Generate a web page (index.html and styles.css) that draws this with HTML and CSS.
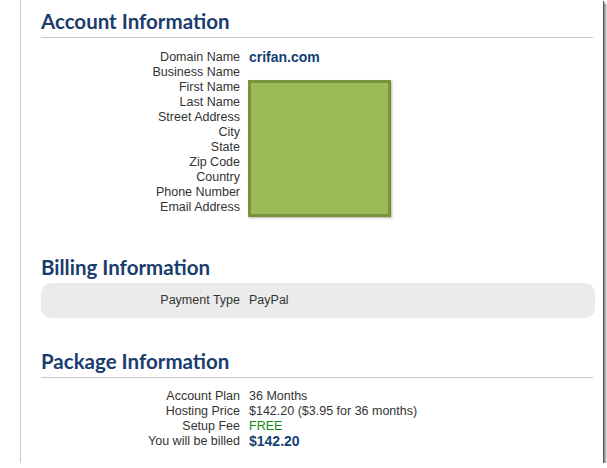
FILE: index.html
```html
<!DOCTYPE html>
<html lang="en">
<head>
    <meta charset="UTF-8">
    <title>Account Information</title>
    <link rel="stylesheet" href="styles.css">
</head>
<body>
    <div class="page">
        <div class="rail"></div>
        <div class="content">
            <h2 class="section-title ruled">Account Information</h2>
            <div class="info-grid account">
                <div class="label">Domain Name</div><div class="value strong">crifan.com</div>
                <div class="label">Business Name</div><div class="value"></div>
                <div class="label">First Name</div><div class="value"></div>
                <div class="label">Last Name</div><div class="value"></div>
                <div class="label">Street Address</div><div class="value"></div>
                <div class="label">City</div><div class="value"></div>
                <div class="label">State</div><div class="value"></div>
                <div class="label">Zip Code</div><div class="value"></div>
                <div class="label">Country</div><div class="value"></div>
                <div class="label">Phone Number</div><div class="value"></div>
                <div class="label">Email Address</div><div class="value"></div>
                <div class="redact"></div>
            </div>

            <h2 class="section-title billing-title">Billing Information</h2>
            <div class="billing-box">
                <div class="info-grid">
                    <div class="label">Payment Type</div><div class="value">PayPal</div>
                </div>
            </div>

            <h2 class="section-title ruled package-title">Package Information</h2>
            <div class="info-grid">
                <div class="label">Account Plan</div><div class="value">36 Months</div>
                <div class="label">Hosting Price</div><div class="value">$142.20 ($3.95 for 36 months)</div>
                <div class="label">Setup Fee</div><div class="value free">FREE</div>
                <div class="label">You will be billed</div><div class="value strong">$142.20</div>
            </div>
        </div>
    </div>
</body>
</html>
```

FILE: styles.css
```css
html {
    background: #fff;
}

body {
    margin: 0;
    padding: 0;
    font-family: 'Liberation Sans', Arial, sans-serif;
    font-size: 12.5px;
    color: #333;
}

.page {
    display: flex;
    width: 603px;
    height: 463px;
    background: #fff;
    box-shadow: 1px 1px 0 #555, 3px 3px 2px rgba(0, 0, 0, 0.45);
}

.rail {
    width: 20px;
    flex: none;
    border-right: 1px solid #c9c9c9;
}

.content {
    flex: 1;
    padding: 9px 8px 0 20px;
}

.section-title {
    margin: 0;
    font-family: Lato, 'Open Sans', sans-serif;
    font-size: 20.5px;
    font-weight: 700;
    line-height: 24px;
    color: #1a3d6e;
}

.section-title.ruled {
    margin-right: 2px;
    padding-bottom: 4px;
    border-bottom: 1px solid #c8c8c8;
}

.billing-title {
    margin-top: 40px;
    margin-bottom: 4px;
}

.package-title {
    margin-top: 31px;
}

.info-grid {
    display: grid;
    grid-template-columns: 199px 1fr;
    column-gap: 9px;
    line-height: 15px;
    margin-top: 11px;
    position: relative;
}

.info-grid.account {
    margin-top: 12px;
}

.info-grid .label {
    text-align: right;
}

.info-grid .value {
    color: #333;
}

.value.strong {
    font-size: 14px;
    font-weight: 700;
    color: #153f72;
}

.value.free {
    color: #158a15;
}

.billing-box {
    background: #ebebeb;
    border-radius: 10px;
    padding: 10px 0;
}

.billing-box .info-grid {
    margin-top: 0;
}

.redact {
    position: absolute;
    left: 207px;
    top: 30px;
    width: 137px;
    height: 131px;
    background: #9bbb59;
    border: 3px solid #77933c;
    box-shadow: 1px 1px 2px rgba(0, 0, 0, 0.3);
}
```
